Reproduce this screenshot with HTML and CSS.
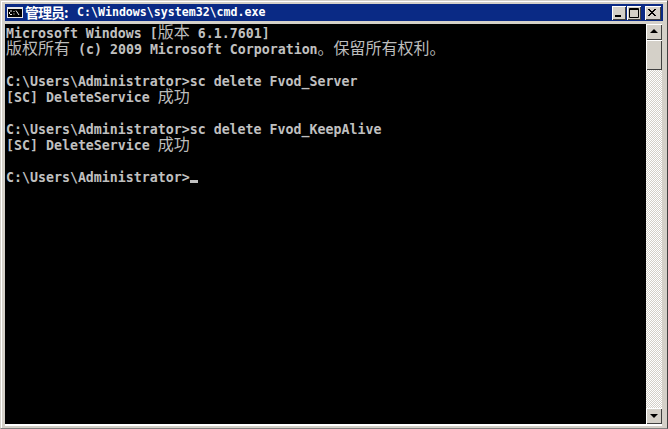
FILE: index.html
```html
<!DOCTYPE html>
<html lang="zh-CN">
<head>
<meta charset="utf-8">
<title>cmd</title>
<link rel="stylesheet" href="styles.css">
</head>
<body>
<div class="window">
  <header class="titlebar">
    <svg class="app-icon" width="16" height="11" viewBox="0 0 16 11">
      <rect width="16" height="11" fill="#e8e8e8"/>
      <rect x="1" y="2" width="14" height="8" fill="#000"/>
      <path d="M3 4h2M2.5 5v2M3 7.5h2M6.5 4.5h1M6.5 7h1M9 3.5l3 4.5" stroke="#eee" stroke-width="1" fill="none"/>
    </svg>
    <div class="title"><span class="title-cjk">管理员:</span><span class="title-path">C:\Windows\system32\cmd.exe</span></div>
    <div class="caption-buttons">
      <button class="cap-btn" aria-label="最小化"><svg width="14" height="14" viewBox="0 0 14 14"><rect x="3" y="9" width="6" height="2" fill="#000"/></svg></button>
      <button class="cap-btn" aria-label="最大化"><svg width="14" height="14" viewBox="0 0 14 14"><path d="M2.5 2.5h9v9h-9zM2.5 3.5h9" fill="none" stroke="#000"/></svg></button>
      <button class="cap-btn cap-close" aria-label="关闭"><svg width="14" height="14" viewBox="0 0 14 14"><path d="M3 3l7 7M4 3l7 7M10 3l-7 7M11 3l-7 7" fill="none" stroke="#000"/></svg></button>
    </div>
  </header>
  <main class="client">
    <div class="console">
      <div class="line">Microsoft Windows [<span class="cjk">版本</span> 6.1.7601]</div>
      <div class="line"><span class="cjk">版权所有</span> (c) 2009 Microsoft Corporation<span class="cjk">。保留所有权利。</span></div>
      <div class="line"></div>
      <div class="line">C:\Users\Administrator&gt;sc delete Fvod_Server</div>
      <div class="line">[SC] DeleteService <span class="cjk">成功</span></div>
      <div class="line"></div>
      <div class="line">C:\Users\Administrator&gt;sc delete Fvod_KeepAlive</div>
      <div class="line">[SC] DeleteService <span class="cjk">成功</span></div>
      <div class="line"></div>
      <div class="line">C:\Users\Administrator&gt;<span class="cursor"></span></div>
    </div>
    <aside class="scrollbar">
      <div class="sb-btn"><svg width="14" height="14" viewBox="0 0 14 14"><path d="M7 4l4 4H3z" fill="#000"/></svg></div>
      <div class="sb-thumb"></div>
      <div class="sb-track"></div>
      <div class="sb-btn"><svg width="14" height="14" viewBox="0 0 14 14"><path d="M3 5h8l-4 4z" fill="#000"/></svg></div>
    </aside>
  </main>
</div>
</body>
</html>
```
FILE: styles.css
```css
* { box-sizing: border-box; }
html, body { margin: 0; padding: 0; background: #d4d0c8; }
.window {
  width: 668px;
  height: 429px;
  display: flex;
  flex-direction: column;
  background: #d4d0c8;
  border-left: 1px solid #d4d0c8;
  border-top: 1px solid #d4d0c8;
  border-right: 1px solid #404040;
  border-bottom: 1px solid #808080;
  box-shadow: inset 1px 1px 0 #fff;
  padding: 3px 4px 2px 4px;
}
.titlebar {
  height: 17px;
  display: flex;
  align-items: center;
  background: #0a2a85;
  color: #fff;
  padding: 0 2px 0 2px;
  flex: none;
}
.app-icon { flex: none; margin-right: 2px; }
.title { display: flex; align-items: center; flex: 1; white-space: nowrap; }
.title-cjk {
  font: bold 14px/17px "Noto Sans CJK SC", sans-serif;
  letter-spacing: -1px;
  width: 52px;
}
.title-path {
  font: bold 11.6px/17px "DejaVu Sans Mono", monospace;
}
.caption-buttons { display: flex; flex: none; }
.cap-btn {
  width: 14px;
  height: 14px;
  padding: 0;
  border: none;
  background: #d4d0c8;
  box-shadow: inset 1px 1px 0 #fff, inset -1px -1px 0 #404040;
  display: block;
  margin-left: 1px;
}
.cap-close { margin-left: 4px; width: 16px; }
.cap-btn svg { display: block; }
.client {
  flex: 1;
  min-height: 0;
  margin-top: 3px;
  margin-right: 1px;
  display: flex;
  border-bottom: 2px solid #fff;
  background: #000;
}
.console {
  flex: 1;
  padding: 2px 0 0 1px;
  background: #000;
  color: #c0c0c0;
  font: bold 13.28px/16px "DejaVu Sans Mono", monospace;
  overflow: hidden;
}
.line {
  height: 16px;
  white-space: pre;
}
.cjk {
  font: 400 16px/0 "Noto Sans CJK SC", sans-serif;
  color: #bcbcbc;
}
.cursor {
  display: inline-block;
  width: 8px;
  height: 3px;
  background: #c0c0c0;
  vertical-align: -1px;
}
.scrollbar {
  width: 16px;
  flex: none;
  display: flex;
  flex-direction: column;
}
.sb-btn {
  height: 16px;
  flex: none;
  background: #d4d0c8;
  box-shadow: inset 1px 1px 0 #fff, inset -1px -1px 0 #404040;
  padding: 1px;
}
.sb-btn svg { display: block; }
.sb-thumb {
  height: 30px;
  flex: none;
  background: #d4d0c8;
  box-shadow: inset 1px 1px 0 #fff, inset -1px -1px 0 #404040;
}
.sb-track {
  flex: 1;
  background-color: #fff;
  background-image: repeating-conic-gradient(#d4d0c8 0 25%, #fff 0 50%);
  background-size: 2px 2px;
}
```
